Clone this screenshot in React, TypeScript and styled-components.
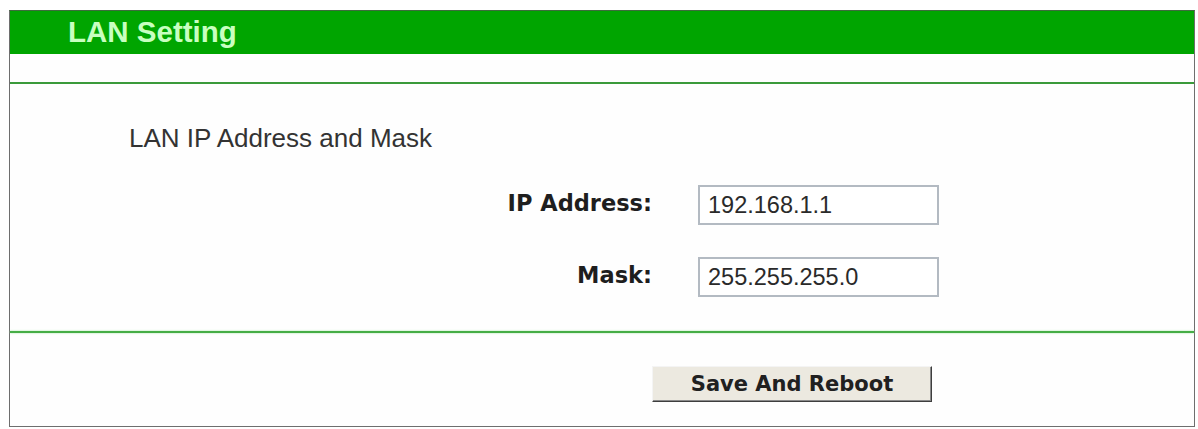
import styled, { createGlobalStyle } from "styled-components";

const GlobalStyle = createGlobalStyle`
  html, body {
    margin: 0;
    padding: 0;
    background: #ffffff;
  }
`;

const Panel = styled.div`
  margin: 10px 3px 0 9px;
  height: 417px;
  box-sizing: border-box;
  border: 1px solid #6e6e6e;
  border-top-color: #3d6b3d;
  display: flex;
  flex-direction: column;
  background: #fefefe;
`;

const TitleBar = styled.div`
  height: 43px;
  background: #00a500;
  color: #c8ffc0;
  font-family: "Liberation Sans", Arial, sans-serif;
  font-weight: bold;
  font-size: 29.5px;
  line-height: 41px;
  padding-left: 58px;
`;

const Strip = styled.div`
  height: 28px;
  border-bottom: 2px solid #3a9a3a;
`;

const Section = styled.div<{ $height: number; $top: number }>`
  height: ${(p) => p.$height}px;
  box-sizing: border-box;
  padding-top: ${(p) => p.$top}px;
`;

const Divider = styled.div`
  height: 2px;
  background: #46ad46;
  box-shadow: 0 0 2px #9be09b;
`;

const GroupTitle = styled.div`
  font-family: "Liberation Sans", Arial, sans-serif;
  font-size: 26px;
  line-height: 30px;
  color: #333333;
  padding-left: 119px;
`;

const Form = styled.div`
  display: grid;
  grid-template-columns: 642px 241px;
  column-gap: 46px;
  row-gap: 32px;
  margin-top: 32px;
`;

const Label = styled.label`
  font-family: "DejaVu Sans", Verdana, sans-serif;
  font-weight: bold;
  font-size: 22.5px;
  color: #1e1e1e;
  text-align: right;
  line-height: 36px;
`;

const Field = styled.input`
  box-sizing: border-box;
  width: 241px;
  height: 40px;
  border: 2px solid #b3bac2;
  padding: 2px 8px 0;
  font-family: "Liberation Sans", Arial, sans-serif;
  font-size: 23.5px;
  color: #2a2a2a;
  background: #ffffff;
  outline: none;
`;

const Actions = styled.div`
  padding-left: 642px;
`;

const Button = styled.button`
  box-sizing: border-box;
  width: 280px;
  height: 36px;
  background: #ece9e0;
  border: 1px solid;
  border-color: #f4f4f4 #3e3e3e #3e3e3e #f4f4f4;
  box-shadow: inset -1px -1px 0 #8a8a8a;
  font-family: "DejaVu Sans", Verdana, sans-serif;
  font-weight: bold;
  font-size: 21px;
  color: #202020;
  padding: 0;
`;

export default function App() {
  return (
    <>
      <GlobalStyle />
      <Panel>
        <TitleBar>LAN Setting</TitleBar>
        <Strip />
        <Section $height={248} $top={39}>
          <GroupTitle>LAN IP Address and Mask</GroupTitle>
          <Form>
            <Label htmlFor="lan-ip">IP Address:</Label>
            <Field id="lan-ip" defaultValue="192.168.1.1" />
            <Label htmlFor="lan-mask">Mask:</Label>
            <Field id="lan-mask" defaultValue="255.255.255.0" />
          </Form>
        </Section>
        <Divider />
        <Section $height={93} $top={33}>
          <Actions>
            <Button type="button">Save And Reboot</Button>
          </Actions>
        </Section>
      </Panel>
    </>
  );
}
